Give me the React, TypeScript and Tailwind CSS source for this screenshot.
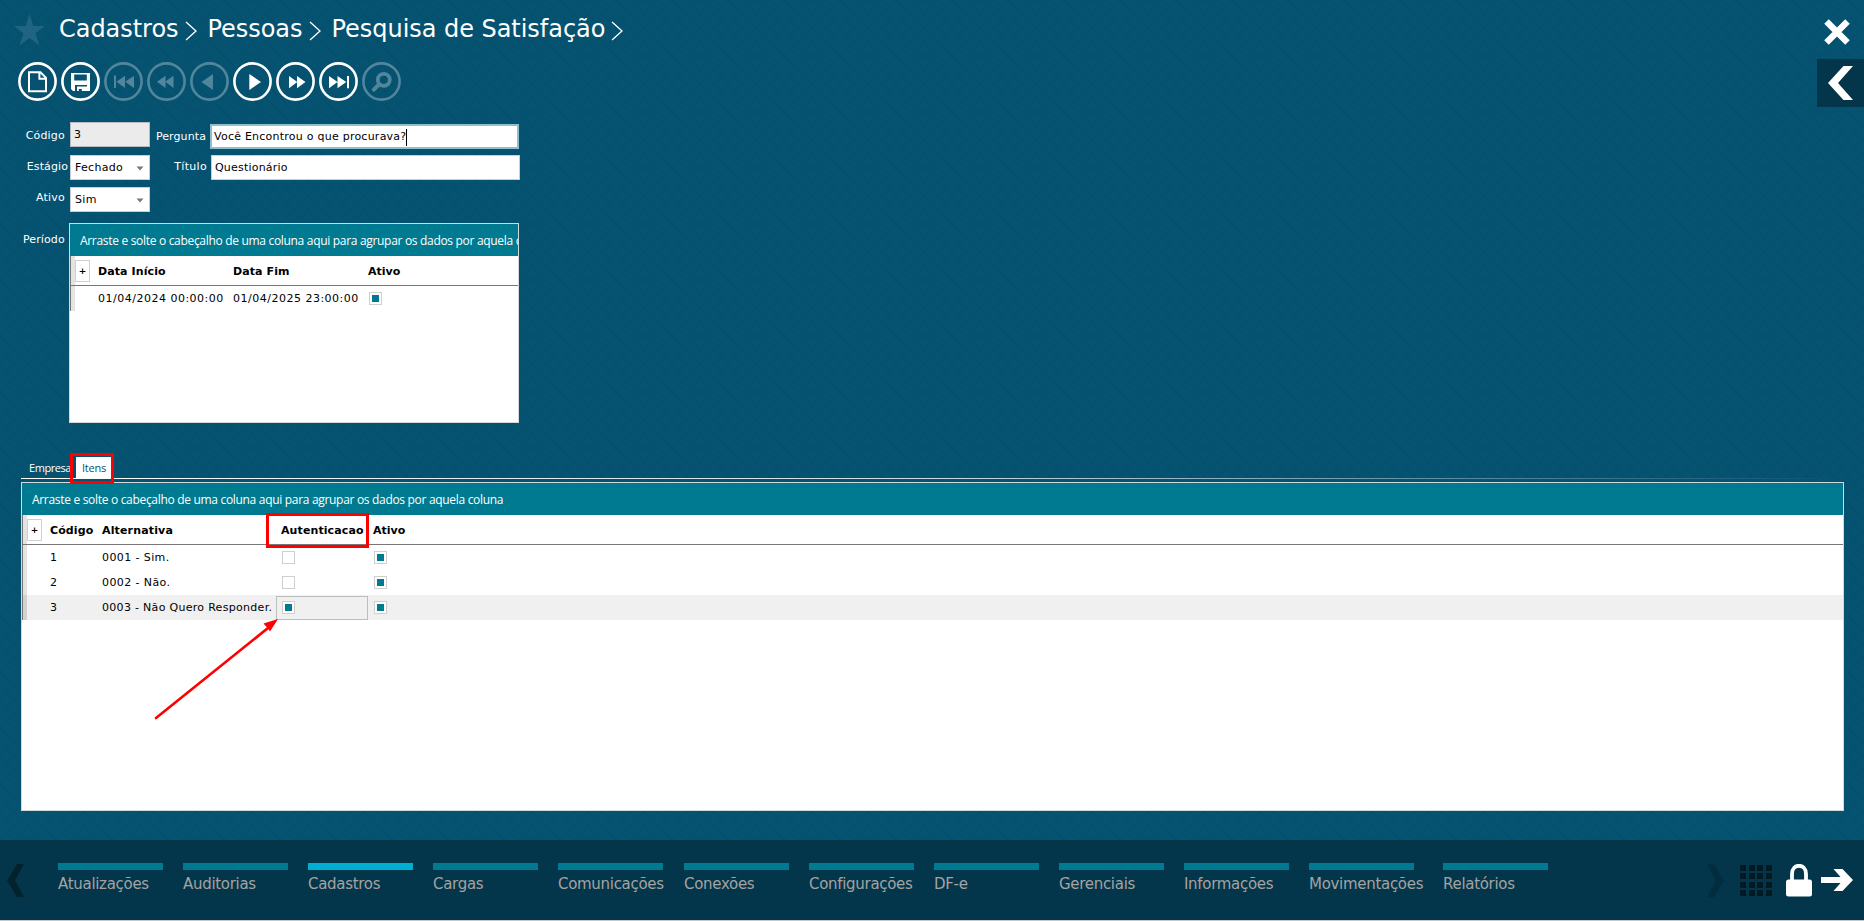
import { ReactNode } from "react";
import clsx from "clsx";

const HINT =
  "Arraste e solte o cabeçalho de uma coluna aqui para agrupar os dados por aquela coluna";

const menuItems = [
  { label: "Atualizações", width: "w-[105px]" },
  { label: "Auditorias", width: "w-[105px]" },
  { label: "Cadastros", width: "w-[105px]", active: true },
  { label: "Cargas", width: "w-[105px]" },
  { label: "Comunicações", width: "w-[106px]" },
  { label: "Conexões", width: "w-[105px]" },
  { label: "Configurações", width: "w-[105px]" },
  { label: "DF-e", width: "w-[105px]" },
  { label: "Gerenciais", width: "w-[105px]" },
  { label: "Informações", width: "w-[105px]" },
  { label: "Movimentações", width: "w-[114px]" },
  { label: "Relatórios", width: "w-[105px]" },
];

const itens = [
  { codigo: 1, alternativa: "0001 - Sim.", autenticacao: false, ativo: true },
  { codigo: 2, alternativa: "0002 - Não.", autenticacao: false, ativo: true },
  {
    codigo: 3,
    alternativa: "0003 - Não Quero Responder.",
    autenticacao: true,
    ativo: true,
    selected: true,
  },
];

const Crumb = ({ children }: { children: ReactNode }) => (
  <div className="flex items-start">
    <span className="whitespace-nowrap">{children}</span>
    <svg className="mt-[6px] ml-[6px]" width="12" height="20" viewBox="0 0 12 20">
      <path d="M1 1 L11 10 L1 19" fill="none" stroke="white" strokeWidth="1.3" />
    </svg>
  </div>
);

const ToolButton = ({
  disabled,
  children,
}: {
  disabled?: boolean;
  children: ReactNode;
}) => (
  <button className={clsx("h-[39px] w-[39px]", disabled && "opacity-30")}>
    <svg width="39" height="39" viewBox="0 0 39 39" fill="white">
      <circle cx="19.5" cy="19.5" r="18.1" fill="none" stroke="white" strokeWidth="2.6" />
      {children}
    </svg>
  </button>
);

const Toolbar = () => (
  <div className="mt-[19px] ml-[18px] flex gap-1">
    <ToolButton>
      <path
        d="M11 10.2 H22.5 L28 15.8 V29.2 H11 Z M21.4 10.2 V16.8 H28"
        fill="none"
        stroke="white"
        strokeWidth="2"
      />
    </ToolButton>
    <ToolButton>
      <path
        fillRule="evenodd"
        d="M10 11 H29 V29 H26 V23 H14 V29 H12 L10 27 Z M13.2 12.4 V18.5 H25.8 V12.4 Z"
      />
      <path fillRule="evenodd" d="M16 24.5 H26 V29 H16 Z M17.8 27 V29 H20.8 V27 Z" />
    </ToolButton>
    <ToolButton disabled>
      <path d="M10 13.5 H12 V26 H10 Z M21 13.7 V26 L12.5 19.8 Z M30 13.7 V26 L21.2 19.8 Z" />
    </ToolButton>
    <ToolButton disabled>
      <path d="M18.5 13.7 V26 L10 19.8 Z M26.5 13.7 V26 L18.2 19.8 Z" />
    </ToolButton>
    <ToolButton disabled>
      <path d="M23 12 V28 L11.5 20 Z" />
    </ToolButton>
    <ToolButton>
      <path d="M16.3 12 V28 L28 20 Z" />
    </ToolButton>
    <ToolButton>
      <path d="M13 14 V26.3 L21.3 20 Z M21 14 V26.3 L29.5 20 Z" />
    </ToolButton>
    <ToolButton>
      <path d="M10 14 V26.3 L18.5 20 Z M18.5 14 V26.3 L27.3 20 Z M28 14 H30 V26.3 H28 Z" />
    </ToolButton>
    <ToolButton disabled>
      <circle cx="21.8" cy="17.8" r="6" fill="none" stroke="white" strokeWidth="3.8" />
      <path d="M17 22.5 L11.8 27.7" stroke="white" strokeWidth="4" strokeLinecap="round" />
    </ToolButton>
  </div>
);

const Label = ({ className, children }: { className: string; children: ReactNode }) => (
  <label className={clsx("shrink-0 text-[11px] leading-[14px] text-white", className)}>
    {children}
  </label>
);

const Select = ({ value }: { value: string }) => (
  <div className="flex h-[25px] w-20 items-center justify-between border border-[#c9ced4] bg-white pt-px pr-[5px] pl-[4px] text-[11px] tracking-[0.3px] text-black">
    {value}
    <svg width="8" height="5" viewBox="0 0 8 5">
      <path d="M0.5 0.5 H7.5 L4 4.5 Z" fill="#7a7a7a" />
    </svg>
  </div>
);

const CheckBox = ({ checked }: { checked?: boolean }) => (
  <span className="flex h-[13px] w-[13px] items-center justify-center border border-[#cfcfcf] bg-white">
    {checked && <span className="h-[7px] w-[7px] bg-[#007a90]" />}
  </span>
);

const GroupHint = () => (
  <div className="h-8 shrink-0 overflow-hidden bg-[#007a90] pl-[10px] font-['Open_Sans','Noto_Sans',sans-serif] text-[12px] leading-[34px] tracking-[-0.31px] whitespace-nowrap text-white">
    {HINT}
  </div>
);

const RowHandle = ({ selected }: { selected?: boolean }) => (
  <span
    className={clsx(
      "w-[5px] shrink-0 self-stretch border-l border-[#777]",
      selected ? "bg-[#d2d2d2]" : "bg-[#e3e3e3]"
    )}
  />
);

const HeaderRow = ({ children }: { children: ReactNode }) => (
  <div className="flex h-[30px] shrink-0 items-center border-b border-[#7a7678] text-[11px] font-bold">
    <RowHandle />
    <span className="flex h-[22px] w-[15px] shrink-0 items-center justify-center border border-[#d0d0d0] pt-[2px] text-[9px]">
      +
    </span>
    {children}
  </div>
);

const PeriodoGrid = () => (
  <div className="flex h-[200px] w-[450px] flex-col border border-[#d3d8da] bg-white">
    <GroupHint />
    <HeaderRow>
      <span className="ml-2 w-[135px] pt-[3px] tracking-[0.1px]">Data Início</span>
      <span className="w-[135px] pt-[3px] tracking-[0.1px]">Data Fim</span>
      <span className="pt-[3px]">Ativo</span>
    </HeaderRow>
    <div className="flex h-[25px] items-center text-[11px] whitespace-nowrap">
      <RowHandle />
      <span className="ml-[23px] w-[135px] pt-px tracking-[0.5px]">01/04/2024 00:00:00</span>
      <span className="w-[136px] pt-px tracking-[0.5px]">01/04/2025 23:00:00</span>
      <CheckBox checked />
    </div>
  </div>
);

const ItensGrid = () => (
  <div className="mt-[3px] flex h-[329px] w-[1823px] flex-col border border-[#d3d8da] bg-white">
    <GroupHint />
    <HeaderRow>
      <span className="ml-2 w-[52px] pt-[3px] tracking-[0.1px]">Código</span>
      <span className="w-[179px] pt-[3px] tracking-[0.15px]">Alternativa</span>
      <span className="w-[92px] pt-[3px] tracking-[0.1px]">Autenticacao</span>
      <span className="pt-[3px]">Ativo</span>
    </HeaderRow>
    {itens.map((item) => (
      <div
        key={item.codigo}
        className={clsx(
          "flex h-[25px] shrink-0 items-center text-[11px] whitespace-nowrap",
          item.selected && "bg-[#f0f0f0]"
        )}
      >
        <RowHandle selected={item.selected} />
        <span className="ml-[23px] w-[52px] pt-px">{item.codigo}</span>
        <span
          className={clsx(
            "w-[174px] pt-px",
            item.selected ? "tracking-[0.3px]" : "tracking-[0.4px]"
          )}
        >
          {item.alternativa}
        </span>
        <div
          className={clsx(
            "mr-[6px] flex h-6 w-[92px] items-center border pl-[5px]",
            item.selected ? "border-[#bdbdbd]" : "border-transparent"
          )}
        >
          <CheckBox checked={item.autenticacao} />
        </div>
        <CheckBox checked={item.ativo} />
      </div>
    ))}
  </div>
);

const Footer = () => (
  <footer className="mt-auto flex h-[81px] shrink-0 border-b border-[#c8c8cc] bg-[#03364a]">
    <svg className="mt-6 ml-[7px]" width="17" height="33" viewBox="0 0 17 33">
      <path d="M10 0 H17 L8 16.5 L17 33 H10 L0 16.5 Z" fill="#02222e" />
    </svg>
    <nav className="mt-[23px] ml-[34px] flex gap-5">
      {menuItems.map((item) => (
        <div key={item.label} className={item.width}>
          <div
            className={clsx(
              "h-[7px] w-[105px]",
              item.active ? "bg-[#00aed1]" : "bg-[#007a90]"
            )}
          />
          <div className="mt-[4px] text-[15px] leading-[20px] tracking-[-0.3px] whitespace-nowrap text-[#a3a3a3]">
            {item.label}
          </div>
        </div>
      ))}
    </nav>
    <div className="mt-6 mr-[11px] ml-auto flex">
      <svg width="17" height="33" viewBox="0 0 17 33">
        <path d="M0 0 H7 L17 16.5 L7 33 H0 L9 16.5 Z" fill="#022d3e" />
      </svg>
      <div className="mt-px ml-4 grid h-[31px] w-8 grid-cols-4 gap-[2.5px]">
        {Array.from({ length: 16 }, (_, i) => (
          <span key={i} className="bg-[#021a24]" />
        ))}
      </div>
      <svg className="ml-[14px]" width="26" height="33" viewBox="0 0 26 33">
        <path
          d="M6 17 V10 C6 -1 20 -1 20 10 V17"
          fill="none"
          stroke="white"
          strokeWidth="3.8"
        />
        <rect x="0" y="15.5" width="26" height="17" rx="2.5" fill="white" />
      </svg>
      <svg className="mt-[5px] ml-[9px]" width="32" height="22" viewBox="0 0 32 22">
        <path d="M0 8 H19.5 L12.5 0 H21.5 L32 11 L21.5 22 H12.5 L19.5 14 H0 Z" fill="white" />
      </svg>
    </div>
  </footer>
);

export default function App() {
  return (
    <div className="relative flex h-[921px] w-[1864px] flex-col overflow-hidden bg-[#065271] bg-[linear-gradient(45deg,transparent_47%,#054a6780_47%_53%,transparent_53%),linear-gradient(-45deg,transparent_47%,#054a6780_47%_53%,transparent_53%)] bg-[length:14px_14px] font-[Verdana,'DejaVu_Sans',sans-serif] text-black">
      <div className="flex shrink-0 justify-between">
        <div>
          <header className="flex h-[43px] pt-[14px] pl-[14px] text-[24px] leading-[29px] text-white">
            <svg className="mr-[14px]" width="31" height="32" viewBox="0 0 31 32">
              <path
                d="M15.5 0 L19.2 12 H31 L21.5 19.2 L25.5 31.5 L15.5 24 L5.5 31.5 L9.5 19.2 L0 12 H11.8 Z"
                fill="#1f6481"
              />
            </svg>
            <div className="flex gap-[11px] pt-px tracking-[-0.04px]">
              <Crumb>Cadastros</Crumb>
              <Crumb>Pessoas</Crumb>
              <Crumb>Pesquisa de Satisfação</Crumb>
            </div>
          </header>
          <Toolbar />
        </div>
        <div className="flex flex-col items-end">
          <svg className="mt-[19px] mr-[14px]" width="26" height="26" viewBox="0 0 26 26">
            <path d="M2.5 2.5 L23.5 23.5 M23.5 2.5 L2.5 23.5" stroke="white" strokeWidth="6.4" />
          </svg>
          <div className="mt-[14px] flex h-12 w-[47px] items-center justify-center bg-[#03364a]">
            <svg width="25" height="34" viewBox="0 0 25 34">
              <path d="M15.5 0 H25 L10 17 L25 34 H15.5 L0 17 Z" fill="white" />
            </svg>
          </div>
        </div>
      </div>

      <div className="mt-[15px] flex shrink-0">
        <div className="flex w-[150px] flex-col gap-2">
          <div className="flex justify-end">
            <Label className="mt-[7px] mr-[5px] tracking-[0.2px]">Código</Label>
            <div className="h-[25px] w-20 shrink-0 border border-[#b9bcc0] bg-[#ebebeb] pl-[3px] text-[11px] leading-[23px]">
              3
            </div>
          </div>
          <div className="flex justify-end">
            <Label className="mt-[5px] mr-[2px] tracking-[0.1px]">Estágio</Label>
            <Select value="Fechado" />
          </div>
          <div className="-mt-px flex justify-end">
            <Label className="mt-[4px] mr-[5px] tracking-[0.2px]">Ativo</Label>
            <Select value="Sim" />
          </div>
        </div>
        <div className="flex w-[370px] flex-col gap-[6px] pt-[2px]">
          <div className="flex justify-end pr-px">
            <Label className="mt-[6px] mr-1 tracking-[0.1px]">Pergunta</Label>
            <div className="flex h-[25px] w-[309px] items-center border-2 border-[#8fbfcd] bg-white pt-px pl-[2px] text-[11px] tracking-[0.24px]">
              Você Encontrou o que procurava?
              <span className="h-[17px] w-px bg-black" />
            </div>
          </div>
          <div className="flex justify-end">
            <Label className="mt-[5px] mr-1 tracking-[0.3px]">Título</Label>
            <div className="flex h-[25px] w-[309px] items-center border border-[#c9ced4] bg-white pt-px pl-[3px] text-[11px] tracking-[0.2px]">
              Questionário
            </div>
          </div>
        </div>
      </div>

      <div className="mt-[11px] flex shrink-0">
        <Label className="mt-[10px] ml-[23px] w-[46px] tracking-[0.1px]">Período</Label>
        <PeriodoGrid />
      </div>

      <div className="mt-[34px] ml-[21px] shrink-0">
        <div className="flex h-[21px] font-['Open_Sans','Noto_Sans',sans-serif] text-[11px] leading-[22px] text-white">
          <span className="w-[55px] pl-2 tracking-[-0.45px]">Empresa</span>
          <span className="w-[35px] bg-white pl-[6px] tracking-[-0.2px] text-[#065271]">
            Itens
          </span>
        </div>
        <div className="h-px w-[1823px] bg-gradient-to-r from-white via-white/80 to-transparent" />
        <ItensGrid />
      </div>

      <Footer />

      {/* highlights */}
      <div className="absolute top-[453px] left-[70px] h-[31px] w-[44px] border-3 border-[#ff0000]" />
      <div className="absolute top-[513px] left-[266px] h-[35px] w-[103px] border-3 border-[#ff0000]" />
      <svg className="absolute top-[610px] left-[150px]" width="135" height="115" viewBox="0 0 135 115">
        <path d="M6 108 L118 18" stroke="#ff0000" strokeWidth="2.6" strokeLinecap="round" />
        <path d="M128 9 L120 21.5 L117.5 18 L113.5 13.5 Z" fill="#ff0000" />
      </svg>
    </div>
  );
}
